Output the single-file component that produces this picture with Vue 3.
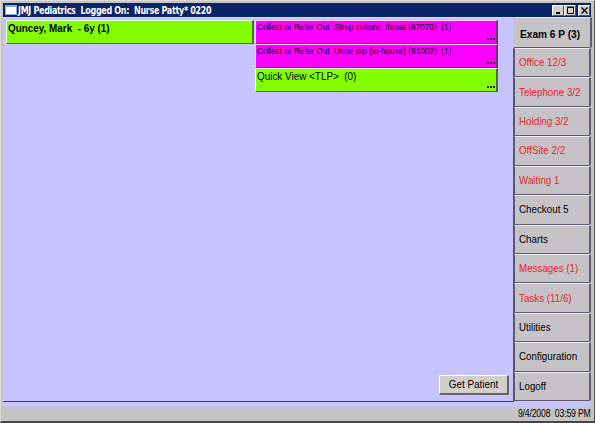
<script setup>
const orders = [
  { text: 'Collect or Refer Out  Strep culture, throat (87070)  (1)', kind: 'pink' },
  { text: 'Collect or Refer Out  Urine dip (in-house) (81002)  (1)', kind: 'pink' },
  { text: 'Quick View <TLP>  (0)', kind: 'lime' },
]
const tabs = [
  { text: 'Office 12/3', alert: true },
  { text: 'Telephone 3/2', alert: true },
  { text: 'Holding 3/2', alert: true },
  { text: 'OffSite 2/2', alert: true },
  { text: 'Waiting 1', alert: true },
  { text: 'Checkout 5' },
  { text: 'Charts' },
  { text: 'Messages (1)', alert: true },
  { text: 'Tasks (11/6)', alert: true },
  { text: 'Utilities' },
  { text: 'Configuration' },
  { text: 'Logoff' },
]
</script>

<template>
  <div class="window">
    <header class="titlebar">
      <svg class="app-icon" width="12" height="10" viewBox="0 0 12 10">
        <rect width="12" height="10" fill="#8fa9cf" />
        <rect x="1" y="2" width="10" height="7" fill="#fff" />
      </svg>
      <h1 class="title"><span class="t">JMJ Pediatrics&nbsp; Logged On:&nbsp; Nurse Patty* 0220</span></h1>
      <div class="controls">
        <button class="ctl"><svg width="9" height="9"><path d="M2 7h4" stroke="#000" stroke-width="2" /></svg></button>
        <button class="ctl"><svg width="9" height="9"><path d="M1.5 1.5h6v6h-6z M1 1h7" fill="none" stroke="#000" /></svg></button>
        <button class="ctl close"><svg width="9" height="9"><path d="M1.5 1.5l6 6M7.5 1.5l-6 6" stroke="#000" stroke-width="1.4" /></svg></button>
      </div>
    </header>
    <div class="body">
      <main class="panel">
        <div class="board">
          <div class="cell lime patient"><span class="t">Quncey, Mark&nbsp; - 6y (1)</span></div>
          <div class="orders">
            <div v-for="o in orders" :key="o.text" class="cell order" :class="o.kind">
              <span class="t">{{ o.text }}</span><i class="dots"></i>
            </div>
          </div>
        </div>
        <button class="get"><span class="t">Get Patient</span></button>
      </main>
      <nav class="tabs">
        <div class="tab active"><span class="t">Exam 6 P (3)</span></div>
        <div v-for="t in tabs" :key="t.text" class="tab" :class="{ alert: t.alert }"><span class="t">{{ t.text }}</span></div>
      </nav>
    </div>
    <footer class="status"><span class="t">9/4/2008&nbsp; 03:59 PM</span></footer>
  </div>
</template>

<style>
body { margin: 0; overflow: hidden; }
</style>
<style scoped>
* { box-sizing: border-box; }
.window {
  width: 595px; height: 423px; display: flex; flex-direction: column;
  padding: 3px 3px 0 2px; background: #c5c3c4;
  border-bottom: 2px solid #464646; border-right: 1px solid #505050;
  border-left: 1px solid #dcdad8; border-top: 1px solid #dcdad8;
  font-family: "Liberation Sans", Arial, sans-serif; font-size: 11px; color: #000;
  white-space: pre;
}
/* condensed lettering */
.t { display: inline-block; transform: scaleX(0.9); transform-origin: 0 50%; }
.titlebar {
  flex: 0 0 14px; margin-top: -1px; display: flex; align-items: center;
  background: #0a246a; padding: 0 1px 0 2px;
}
.app-icon { flex: none; }
.title {
  margin: 0 0 0 1px; flex: 1; color: #fff; font: bold 10px/13px "DejaVu Sans Condensed", "DejaVu Sans", sans-serif;
  letter-spacing: -0.35px;
}
.title .t { transform: scaleX(0.89); }
.controls { display: flex; }
.ctl {
  width: 12px; height: 11px; padding: 0; border: 1px solid; border-color: #fff #555 #555 #fff;
  background: #d4d0c8; display: flex; align-items: center; justify-content: center;
}
.close { margin-left: 2px; }
.body { flex: 1; min-height: 0; display: flex; background: #c8c4ff; padding-bottom: 5px; }
.panel {
  width: 511px; display: flex; flex-direction: column; justify-content: space-between;
  border-bottom: 1px solid #40404c; border-right: 1px solid #50506a; border-top: 1px solid #dedcf0;
  padding: 2px 4px 6px 3px;
}
.board { display: flex; gap: 1px; }
.cell { border: 1px solid; border-color: #e4ffd0 #477035 #4b6b3a #e4ffd0; border-right-width: 2px; }
.lime { background: #84ff00; }
.pink { background: #ff00ff; border-color: #ffd4ff #76307f #76307f #ffd4ff; }
.patient { width: 248px; height: 24px; padding-left: 1px; font-size: 11px; line-height: 15px; font-weight: bold; }
.orders { width: 243px; display: flex; flex-direction: column; }
.order { height: 24px; display: flex; justify-content: space-between; padding: 0 1px; font-size: 8.5px; line-height: 13px; }
.order .t { transform: scaleX(0.965); }
.order.lime { font-size: 11px; line-height: 15px; }
.order.lime .t { transform: scaleX(0.9); }
.dots {
  align-self: flex-end; width: 8px; height: 2px; margin-bottom: 3px;
  background: repeating-linear-gradient(90deg, #222 0 2px, transparent 2px 3px);
}
.get {
  align-self: flex-end; width: 70px; height: 20px; padding: 0; background: #d2cfca;
  border: 1px solid; border-color: #fff #66646a #66646a #fff; border-right-width: 2px; border-bottom-width: 2px;
  font: 11px/17px "Liberation Sans", Arial, sans-serif; color: #000;
}
.get .t { transform-origin: 50% 50%; }
.tabs { width: 77px; display: flex; flex-direction: column; }
.tab {
  flex: 1; display: flex; align-items: center; padding: 0 0 1px 3.5px; font-size: 11px;
  background: #c5c3c5; border: 1px solid; border-color: #ececf0 #5e5c74 #5e5c6c #5e5c6c;
  border-right-width: 2px; border-radius: 0 1px 2px 0;
}
.tab .t { transform: scaleX(0.89); }
.alert { color: #e82430; }
.active { flex: 0 0 31px; width: 79px; margin-left: -1px; padding: 2px 0 0 6px; font-weight: bold; border-left-color: #c5c3c5; }
.active .t { transform: scaleX(0.92); }
.tab:last-child { margin-bottom: 1px; }
.status {
  flex: 0 0 14px; height: 14px; display: flex; justify-content: flex-end; font-size: 10px; line-height: 14px; letter-spacing: -0.2px;
}
.status .t { transform: scaleX(0.87); transform-origin: 100% 50%; }
</style>
